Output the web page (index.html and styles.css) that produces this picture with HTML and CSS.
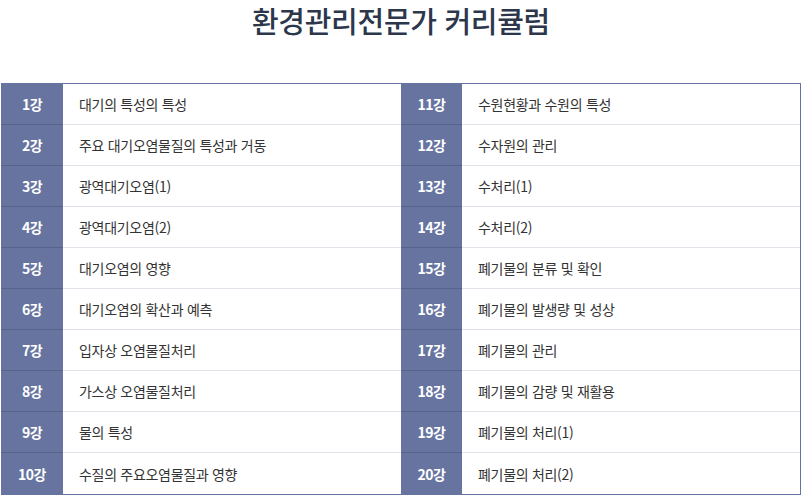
FILE: index.html
```html
<!DOCTYPE html>
<html lang="ko">

<head>
    <meta charset="UTF-8">
    <meta name="viewport" content="width=device-width, initial-scale=1.0">
    <title>환경관리전문가 커리큘럼</title>
    <link rel="stylesheet" href="styles.css">
</head>

<body>
    <div class="wrap">
        <h1 class="title">환경관리전문가 커리큘럼</h1>
        <div class="curriculum">
            <div class="no">1강</div><div class="name">대기의 특성의 특성</div>
            <div class="no">11강</div><div class="name">수원현황과 수원의 특성</div>

            <div class="no">2강</div><div class="name">주요 대기오염물질의 특성과 거동</div>
            <div class="no">12강</div><div class="name">수자원의 관리</div>

            <div class="no">3강</div><div class="name">광역대기오염(1)</div>
            <div class="no">13강</div><div class="name">수처리(1)</div>

            <div class="no">4강</div><div class="name">광역대기오염(2)</div>
            <div class="no">14강</div><div class="name">수처리(2)</div>

            <div class="no">5강</div><div class="name">대기오염의 영향</div>
            <div class="no">15강</div><div class="name">폐기물의 분류 및 확인</div>

            <div class="no">6강</div><div class="name">대기오염의 확산과 예측</div>
            <div class="no">16강</div><div class="name">폐기물의 발생량 및 성상</div>

            <div class="no">7강</div><div class="name">입자상 오염물질처리</div>
            <div class="no">17강</div><div class="name">폐기물의 관리</div>

            <div class="no">8강</div><div class="name">가스상 오염물질처리</div>
            <div class="no">18강</div><div class="name">폐기물의 감량 및 재활용</div>

            <div class="no">9강</div><div class="name">물의 특성</div>
            <div class="no">19강</div><div class="name">폐기물의 처리(1)</div>

            <div class="no last">10강</div><div class="name last">수질의 주요오염물질과 영향</div>
            <div class="no last">20강</div><div class="name last">폐기물의 처리(2)</div>
        </div>
    </div>
</body>

</html>
```

FILE: styles.css
```css
* {
    box-sizing: border-box;
    margin: 0;
    padding: 0;
}

body {
    background: #fff;
    font-family: "Noto Sans CJK KR", "Noto Sans", sans-serif;
    color: #333;
}

.wrap {
    width: 800px;
    margin-left: 1px;
}

.title {
    height: 83px;
    line-height: 40px;
    font-size: 29px;
    font-weight: 500;
    letter-spacing: -0.3px;
    color: #2c374c;
    text-align: center;
}

.curriculum {
    display: grid;
    grid-template-columns: 62px 338px 61px 1fr;
    grid-auto-rows: 41px;
    border-top: 1px solid #6473a0;
    border-right: 1px solid #6473a0;
    border-bottom: 1px solid #6473a0;
}

.no,
.name {
    display: flex;
    align-items: center;
    border-bottom: 1px solid #e2e2ea;
}

.no {
    justify-content: center;
    background: #66749f;
    border-bottom-color: #56638c;
    color: #fff;
    font-size: 14px;
    font-weight: 700;
    letter-spacing: -0.5px;
}

.name {
    padding-left: 16px;
    font-size: 14px;
    letter-spacing: -0.3px;
    color: #333;
}

.last {
    border-bottom: none;
}
```
